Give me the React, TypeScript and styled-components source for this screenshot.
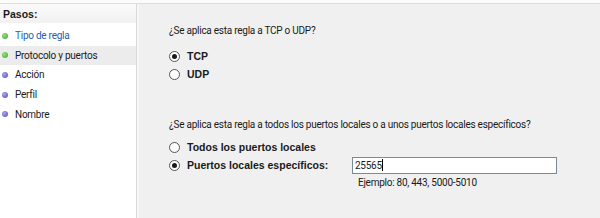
import React from 'react';
import styled, {createGlobalStyle} from 'styled-components';

const GlobalStyle = createGlobalStyle`
    html, body {
        margin: 0;
        padding: 0;
        background: #f0f0f0;
    }
    * {
        box-sizing: border-box;
    }
`

const Window = styled.div`
    width: 600px;
    height: 218px;
    display: flex;
    flex-direction: column;
    background-color: #f0f0f0;
    font-family: Roboto, "Liberation Sans", Arial, sans-serif;
    font-size: 10px;
    letter-spacing: -0.25px;
    color: #1a1a1a;
    overflow: hidden;
`
const TopStrip = styled.div`
    height: 4px;
    background-color: #fbfbfb;
    border-bottom: solid 1px #dedede;
    flex-shrink: 0;
`
const Body = styled.div`
    flex: 1;
    display: flex;
`
const Sidebar = styled.div`
    width: 137px;
    background-color: #ffffff;
    border-right: solid 1px #dadada;
    display: flex;
    flex-direction: column;
`
const SideHeader = styled.div`
    height: 19px;
    padding-left: 3px;
    display: flex;
    align-items: center;
    font-family: "Liberation Sans", Arial, sans-serif;
    font-size: 10.5px;
    font-weight: bold;
    letter-spacing: 0;
    background: linear-gradient(#fafafa, #f1f1f1);
    margin-bottom: 2px;
`
const StepList = styled.div`
    display: flex;
    flex-direction: column;
    padding-top: 1px;
`
const Step = styled.div<{ selected: boolean; current: boolean; }>`
    height: 19.6px;
    display: flex;
    align-items: center;
    gap: 7px;
    padding-left: 2px;
    background-color: ${props => props.selected ? '#ececec' : 'transparent'};
    color: ${props => props.current ? '#1f5fae' : '#1a1a1a'};
`
const Dot = styled.span<{ done: boolean; }>`
    width: 6px;
    height: 6px;
    border-radius: 50%;
    flex-shrink: 0;
    background: ${props => props.done
        ? 'radial-gradient(circle at 35% 35%, #9be07a, #3aa52a)'
        : 'radial-gradient(circle at 35% 35%, #a6a6ee, #4d4dc0)'};
`
const Main = styled.div`
    flex: 1;
    border-left: solid 2px #f6f6f6;
    padding: 20px 0 0 28px;
    display: flex;
    flex-direction: column;
`
const Question = styled.div<{ spacing: number; }>`
    height: 13px;
    line-height: 13px;
    padding-left: 2px;
    margin-top: ${props => props.spacing}px;
`
const OptionGroup = styled.div<{ spacing: number; }>`
    margin-top: ${props => props.spacing}px;
    display: flex;
    flex-direction: column;
    gap: 4px;
`
const OptionRow = styled.div`
    min-height: 14px;
    display: flex;
    align-items: flex-start;
    padding-left: 2px;
`
const Radio = styled.span<{ checked: boolean; }>`
    width: 11px;
    height: 11px;
    margin-top: 1.5px;
    border-radius: 50%;
    border: solid 1px #555555;
    background-color: #ffffff;
    display: flex;
    align-items: center;
    justify-content: center;
    flex-shrink: 0;
    margin-right: 7px;
    &::after {
        content: '';
        width: 5px;
        height: 5px;
        border-radius: 50%;
        background-color: #1a1a1a;
        display: ${props => props.checked ? 'block' : 'none'};
    }
`
const OptionLabel = styled.span<{ width?: number; }>`
    font-family: "Liberation Sans", Arial, sans-serif;
    font-size: 10.5px;
    font-weight: bold;
    letter-spacing: 0;
    height: 14px;
    line-height: 14px;
    width: ${props => props.width ? props.width + 'px' : 'auto'};
    flex-shrink: 0;
`
const PortBlock = styled.div`
    display: flex;
    flex-direction: column;
    margin-top: -1.5px;
`
const PortInput = styled.div`
    width: 205px;
    height: 17px;
    background-color: #ffffff;
    border: solid 1px #7a8a99;
    display: flex;
    align-items: center;
    padding-left: 2px;
`
const Caret = styled.span`
    width: 1px;
    height: 12px;
    background-color: #000000;
`
const Hint = styled.div`
    padding-left: 6px;
    margin-top: 2px;
    height: 13px;
    line-height: 13px;
`

const steps = [
    {name: 'Tipo de regla', done: true},
    {name: 'Protocolo y puertos', done: true},
    {name: 'Acción', done: false},
    {name: 'Perfil', done: false},
    {name: 'Nombre', done: false},
];

function App(){
    return(
        <Window>
            <GlobalStyle />
            <TopStrip />
            <Body>
                <Sidebar>
                    <SideHeader>Pasos:</SideHeader>
                    <StepList>
                        {steps.map((s, i) => (
                            <Step key={s.name} selected={i === 1} current={i === 0}>
                                <Dot done={s.done} />
                                {s.name}
                            </Step>
                        ))}
                    </StepList>
                </Sidebar>
                <Main>
                    <Question spacing={0}>¿Se aplica esta regla a TCP o UDP?</Question>
                    <OptionGroup spacing={12}>
                        <OptionRow><Radio checked={true} /><OptionLabel>TCP</OptionLabel></OptionRow>
                        <OptionRow><Radio checked={false} /><OptionLabel>UDP</OptionLabel></OptionRow>
                    </OptionGroup>
                    <Question spacing={37}>¿Se aplica esta regla a todos los puertos locales o a unos puertos locales específicos?</Question>
                    <OptionGroup spacing={9}>
                        <OptionRow><Radio checked={false} /><OptionLabel>Todos los puertos locales</OptionLabel></OptionRow>
                        <OptionRow>
                            <Radio checked={true} />
                            <OptionLabel width={165}>Puertos locales específicos:</OptionLabel>
                            <PortBlock>
                                <PortInput>25565<Caret /></PortInput>
                                <Hint>Ejemplo: 80, 443, 5000-5010</Hint>
                            </PortBlock>
                        </OptionRow>
                    </OptionGroup>
                </Main>
            </Body>
        </Window>
    );
}

export default App;
